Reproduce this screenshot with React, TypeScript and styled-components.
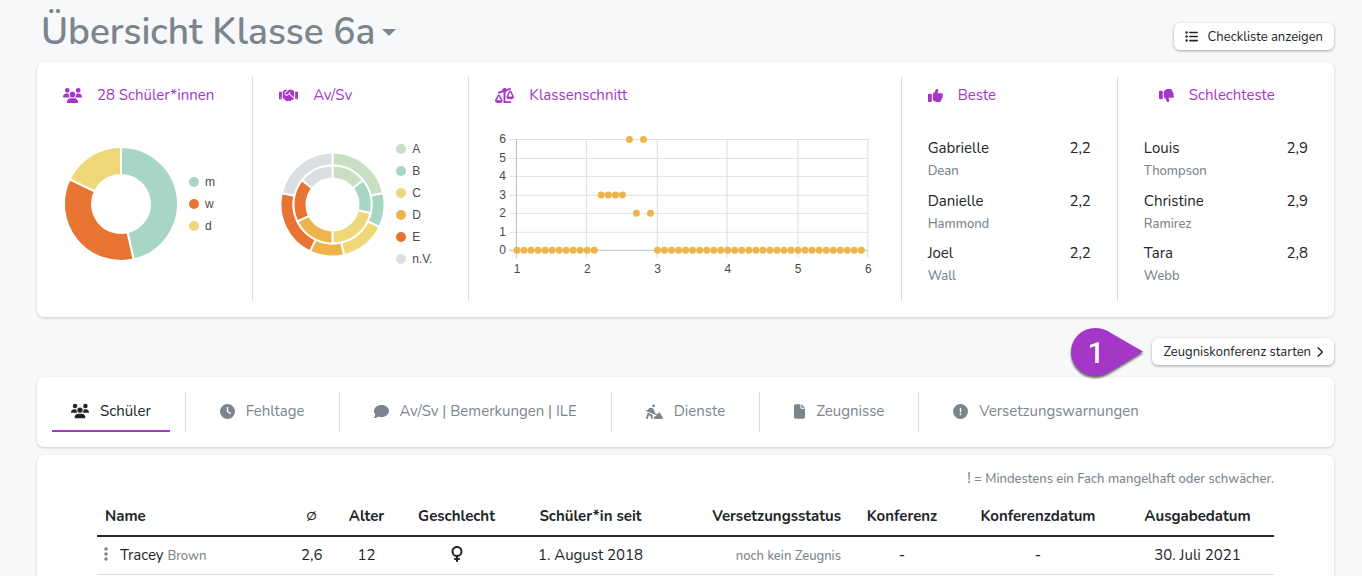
import React from 'react';
import styled, { createGlobalStyle } from 'styled-components';
import { FaBalanceScaleLeft, FaHandshake } from 'react-icons/fa';
import {
  FaUsers,
  FaClock,
  FaComment,
  FaPersonDigging,
  FaFile,
  FaCircleExclamation,
  FaListUl,
  FaVenus,
  FaEllipsisVertical,
  FaChevronRight,
  FaThumbsUp,
  FaThumbsDown,
} from 'react-icons/fa6';

const color = {
  page: '#f7f8fa',
  text: '#212529',
  muted: '#7c858d',
  accent: '#a537c8',
  line: '#dadce0',
  sage: '#c9dfc3',
  mint: '#a8d6c5',
  yellow: '#efd777',
  amber: '#eeb44b',
  orange: '#e87431',
  grey: '#dadde2',
};

const GlobalStyle = createGlobalStyle`
  *, *::before, *::after { box-sizing: border-box; }
  body {
    margin: 0;
    background: ${color.page};
    color: ${color.text};
    font-family: Nunito, Lato, sans-serif;
    font-size: 15px;
    line-height: 22px;
  }
  button { font: inherit; color: inherit; cursor: pointer; }
`;

const Page = styled.div`
  display: flex;
  flex-direction: column;
  min-height: 100vh;
  padding: 0 28px 0 37px;
`;

const Header = styled.header`
  display: flex;
  justify-content: space-between;
  align-items: flex-end;
  height: 50px;
  margin-bottom: 12px;
  padding-left: 4px;
`;

const Title = styled.h1`
  align-self: flex-start;
  margin: 0;
  padding-top: 13px;
  color: ${color.muted};
  font-size: 37px;
  font-weight: 600;
  line-height: 38px;
`;

const TitleButton = styled.button`
  display: flex;
  align-items: center;
  gap: 7px;
  height: 38px;
  padding: 0;
  border: 0;
  background: none;
`;

const Caret = styled.span`
  border: 7px solid transparent;
  border-top-color: currentColor;
  border-bottom: 0;
`;

const Button = styled.button<{ $gap: number }>`
  display: inline-flex;
  align-items: center;
  gap: ${(p) => p.$gap}px;
  height: 27px;
  padding: 0 11px;
  border: 0;
  border-radius: 6px;
  background: #fff;
  box-shadow: 0 1px 3px rgba(0, 0, 0, 0.35);
  font-size: 13px;
  line-height: 20px;
  white-space: nowrap;
`;

const Chevron = styled(FaChevronRight)`
  width: 7px;
  height: 12px;
`;

const FileIcon = styled(FaFile)`
  width: 11px;
  height: 15px;
`;

const Card = styled.section`
  border-radius: 7px;
  background: #fff;
  box-shadow: 0 1px 3px rgba(0, 0, 0, 0.18);
`;

const Stats = styled(Card)`
  display: grid;
  grid-template-columns: 2fr 2fr 4fr 2fr 2fr;
  padding: 15px 0 16px;
`;

const Stat = styled.div`
  display: flex;
  flex-direction: column;
  min-width: 0;
  height: 224px;
  padding: 7px 26px 0;
  &:not(:last-child) { border-right: 1px solid ${color.line}; }
`;

const StatTitle = styled.h2<{ $indent?: number }>`
  display: flex;
  align-items: center;
  gap: 15px;
  margin: 0;
  padding-left: ${(p) => p.$indent ?? 0}px;
  color: ${color.accent};
  font-size: 15px;
  font-weight: 400;
  line-height: 22px;
  white-space: nowrap;
`;

const DonutRow = styled.div`
  display: flex;
  align-items: center;
  gap: 10px;
  height: 140px;
  margin-top: 28px;
`;

const Legend = styled.ul`
  margin: 0;
  padding: 0;
  list-style: none;
  font-family: "Liberation Sans", sans-serif;
  font-size: 12px;
  color: #4a4a4a;
`;

const LegendItem = styled.li<{ $color: string }>`
  display: flex;
  align-items: center;
  gap: 6px;
  height: 22px;
  &::before {
    content: "";
    width: 10px;
    height: 10px;
    border-radius: 50%;
    background: ${(p) => p.$color};
  }
`;

const Plot = styled.svg`
  display: block;
  width: 100%;
  margin-top: 24px;
  font-family: "Liberation Sans", sans-serif;
  font-size: 12px;
  fill: #4a4a4a;
`;

const Ranking = styled.ul`
  display: grid;
  align-content: space-between;
  height: 150px;
  margin: 31px 0 0;
  padding: 0;
  list-style: none;
`;

const RankItem = styled.li`
  display: grid;
  grid-template-columns: 1fr auto;
  row-gap: 1px;
`;

const Surname = styled.span`
  color: ${color.muted};
  font-size: 13px;
  font-weight: 500;
`;

const ActionRow = styled.div`
  display: flex;
  justify-content: flex-end;
  align-items: center;
  height: 60px;
  padding-top: 9px;
`;

const Callout = styled.svg`
  width: 82px;
  height: 60px;
  filter: drop-shadow(0 2px 1px rgba(0, 0, 0, 0.6));
`;

const CalloutNumber = styled.text`
  fill: #fff;
  font-family: Roboto, sans-serif;
  font-size: 30px;
  font-weight: 500;
`;

const TabBar = styled(Card)`
  padding: 15px 0;
`;

const TabList = styled.nav`
  display: flex;
  height: 40px;
`;

const TabSlot = styled.div`
  display: flex;
  padding: 0 15px;
  & + & { border-left: 1px solid ${color.line}; }
`;

const Tab = styled.a<{ $active?: boolean }>`
  display: flex;
  align-items: center;
  gap: 11px;
  padding: 0 19px;
  border-bottom: 2px solid ${(p) => (p.$active ? color.accent : 'transparent')};
  color: ${(p) => (p.$active ? color.text : color.muted)};
  text-decoration: none;
  white-space: nowrap;
`;

const TableCard = styled(Card)`
  flex: 1;
  margin-top: 8px;
  padding: 12px 60px 0;
  border-radius: 7px 7px 0 0;
`;

const Note = styled.p`
  margin: 0;
  color: ${color.muted};
  font-size: 13px;
  font-weight: 500;
  text-align: right;
`;

const Mark = styled.span`
  font-size: 15px;
`;

const Table = styled.table`
  width: 100%;
  margin-top: 6px;
  border-collapse: collapse;
  table-layout: fixed;
`;

type Align = 'left' | 'center' | 'right';

const Th = styled.th<{ $align?: Align }>`
  height: 40px;
  padding: 0 8px;
  border-bottom: 2px solid ${color.text};
  font-weight: 700;
  text-align: ${(p) => p.$align ?? 'center'};
  white-space: nowrap;
`;

const Td = styled.td<{ $align?: Align }>`
  height: 38px;
  padding: 0 8px;
  border-bottom: 1px solid ${color.line};
  text-align: ${(p) => p.$align ?? 'center'};
  white-space: nowrap;
  svg { vertical-align: -2px; }
`;

const MenuButton = styled.button`
  width: 4px;
  margin-right: 11px;
  padding: 0;
  border: 0;
  background: none;
  color: ${color.muted};
  svg { margin-left: -7px; }
`;

const rad = (turn: number) => turn * Math.PI * 2 - Math.PI / 2;

function arc(c: number, outer: number, inner: number, from: number, to: number) {
  const point = (r: number, t: number) =>
    `${(c + r * Math.cos(rad(t))).toFixed(2)} ${(c + r * Math.sin(rad(t))).toFixed(2)}`;
  const large = to - from > 0.5 ? 1 : 0;
  return `M${point(outer, from)}A${outer} ${outer} 0 ${large} 1 ${point(outer, to)}L${point(inner, to)}A${inner} ${inner} 0 ${large} 0 ${point(inner, from)}Z`;
}

interface Ring { outer: number; inner: number; values: number[] }

interface DonutProps { size: number; rings: Ring[]; colors: string[]; label: string }

function Donut({ size, rings, colors, label }: DonutProps) {
  return (
    <svg width={size} height={size} viewBox={`0 0 ${size} ${size}`} role="img" aria-label={label}>
      {rings.map((ring, r) => {
        const total = ring.values.reduce((a, b) => a + b, 0);
        let sum = 0;
        return ring.values.map((v, i) => {
          const from = sum / total;
          sum += v;
          return (
            <path
              key={`${r}-${i}`}
              d={arc(size / 2, ring.outer, ring.inner, from, sum / total)}
              fill={colors[i]}
              stroke="#fff"
              strokeWidth="2"
            />
          );
        });
      })}
    </svg>
  );
}

const genderLegend = [
  { name: 'm', color: color.mint },
  { name: 'w', color: color.orange },
  { name: 'd', color: color.yellow },
];

const gradeLegend = [
  { name: 'A', color: color.sage },
  { name: 'B', color: color.mint },
  { name: 'C', color: color.yellow },
  { name: 'D', color: color.amber },
  { name: 'E', color: color.orange },
  { name: 'n.V.', color: color.grey },
];

const counts: Record<number, number> = { 22: 3, 23: 3, 24: 3, 25: 3, 26: 6, 27: 2, 28: 6, 29: 2 };
const points = Array.from({ length: 50 }, (_, i) => ({ x: i + 10, y: counts[i + 10] ?? 0 }));
const px = (v: number) => 22 + (v - 1) * 70.4;
const py = (v: number) => 120.5 - v * 18.5;

function AveragePlot() {
  return (
    <Plot viewBox="0 0 380 150" role="img" aria-label="Klassenschnitt">
      {[0, 1, 2, 3, 4, 5, 6].map((v) => (
        <g key={v}>
          <path d={`M14 ${Math.floor(py(v)) + 0.5}H374`} stroke={v === 0 ? '#bfbfbf' : '#e2e2e2'} />
          <text x="11" y={py(v) + 4} textAnchor="end">{v}</text>
        </g>
      ))}
      {[1, 2, 3, 4, 5, 6].map((v) => (
        <g key={v}>
          <path d={`M${Math.round(px(v)) - 0.5} 9V128`} stroke={v === 1 ? '#bfbfbf' : '#dcdcdc'} />
          <text x={px(v)} y="143" textAnchor="middle">{v}</text>
        </g>
      ))}
      {points.map((p) => (
        <circle key={p.x} cx={px(p.x / 10)} cy={py(p.y)} r="3.5" fill={color.amber} />
      ))}
    </Plot>
  );
}

const best = [
  ['Gabrielle', 'Dean', '2,2'],
  ['Danielle', 'Hammond', '2,2'],
  ['Joel', 'Wall', '2,2'],
];
const worst = [
  ['Louis', 'Thompson', '2,9'],
  ['Christine', 'Ramirez', '2,9'],
  ['Tara', 'Webb', '2,8'],
];

function RankingList({ items }: { items: string[][] }) {
  return (
    <Ranking>
      {items.map(([first, last, grade]) => (
        <RankItem key={first}>
          <span>{first}</span>
          <span>{grade}</span>
          <Surname>{last}</Surname>
        </RankItem>
      ))}
    </Ranking>
  );
}

const tabs = [
  { label: 'Schüler', icon: <FaUsers size={18} />, active: true },
  { label: 'Fehltage', icon: <FaClock size={15} /> },
  { label: 'Av/Sv | Bemerkungen | ILE', icon: <FaComment size={15} /> },
  { label: 'Dienste', icon: <FaPersonDigging size={17} /> },
  { label: 'Zeugnisse', icon: <FileIcon /> },
  { label: 'Versetzungswarnungen', icon: <FaCircleExclamation size={15} /> },
];

const columns: { label: string; width: number; align?: Align }[] = [
  { label: 'Name', width: 196, align: 'left' },
  { label: '∅', width: 37 },
  { label: 'Alter', width: 73 },
  { label: 'Geschlecht', width: 107 },
  { label: 'Schüler*in seit', width: 161 },
  { label: 'Versetzungsstatus', width: 178, align: 'right' },
  { label: 'Konferenz', width: 106 },
  { label: 'Konferenzdatum', width: 166 },
  { label: 'Ausgabedatum', width: 153 },
];

export default function App() {
  return (
    <>
      <GlobalStyle />
      <Page>
        <Header>
          <Title>
            <TitleButton type="button" aria-haspopup="menu">
              Übersicht Klasse 6a
              <Caret />
            </TitleButton>
          </Title>
          <Button type="button" $gap={10}>
            <FaListUl size={13} />
            Checkliste anzeigen
          </Button>
        </Header>

        <Stats>
          <Stat>
            <StatTitle><FaUsers size={19} />28 Schüler*innen</StatTitle>
            <DonutRow>
              <Donut
                size={116}
                label="Geschlecht"
                colors={genderLegend.map((l) => l.color)}
                rings={[{ outer: 57, inner: 29, values: [13, 10, 5] }]}
              />
              <Legend>
                {genderLegend.map((l) => <LegendItem key={l.name} $color={l.color}>{l.name}</LegendItem>)}
              </Legend>
            </DonutRow>
          </Stat>
          <Stat>
            <StatTitle><FaHandshake size={19} />Av/Sv</StatTitle>
            <DonutRow>
              <Donut
                size={107}
                label="Av/Sv"
                colors={gradeLegend.map((l) => l.color)}
                rings={[
                  { outer: 52, inner: 39, values: [6, 3, 4, 3, 6, 6] },
                  { outer: 39, inner: 26, values: [4, 4, 6, 5, 5, 4] },
                ]}
              />
              <Legend>
                {gradeLegend.map((l) => <LegendItem key={l.name} $color={l.color}>{l.name}</LegendItem>)}
              </Legend>
            </DonutRow>
          </Stat>
          <Stat>
            <StatTitle><FaBalanceScaleLeft size={19} />Klassenschnitt</StatTitle>
            <AveragePlot />
          </Stat>
          <Stat>
            <StatTitle><FaThumbsUp size={15} />Beste</StatTitle>
            <RankingList items={best} />
          </Stat>
          <Stat>
            <StatTitle $indent={15}><FaThumbsDown size={15} />Schlechteste</StatTitle>
            <RankingList items={worst} />
          </Stat>
        </Stats>

        <ActionRow>
          <Callout viewBox="0 0 82 60" role="img" aria-label="1">
            <path d="M73 29.500L40 10.500C36 7.500 31 6 25 6A24 24 0 1 0 25 54C31 54 36 52 40 49.500Z" fill={color.accent} />
            <CalloutNumber x="26" y="41" textAnchor="middle">1</CalloutNumber>
          </Callout>
          <Button type="button" $gap={5}>
            Zeugniskonferenz starten
            <Chevron />
          </Button>
        </ActionRow>

        <TabBar>
          <TabList>
            {tabs.map((t) => (
              <TabSlot key={t.label}>
                <Tab href="#" $active={t.active}>{t.icon}{t.label}</Tab>
              </TabSlot>
            ))}
          </TabList>
        </TabBar>

        <TableCard>
          <Note><Mark>!</Mark> = Mindestens ein Fach mangelhaft oder schwächer.</Note>
          <Table>
            <colgroup>
              {columns.map((c) => <col key={c.label} width={c.width} />)}
            </colgroup>
            <thead>
              <tr>
                {columns.map((c) => <Th key={c.label} scope="col" $align={c.align}>{c.label}</Th>)}
              </tr>
            </thead>
            <tbody>
              <tr>
                <Td $align="left">
                  <MenuButton type="button" aria-label="Aktionen"><FaEllipsisVertical size={16} /></MenuButton>
                  Tracey <Surname>Brown</Surname>
                </Td>
                <Td>2,6</Td>
                <Td>12</Td>
                <Td><FaVenus size={16} aria-label="weiblich" /></Td>
                <Td>1. August 2018</Td>
                <Td $align="right"><Surname>noch kein Zeugnis</Surname></Td>
                <Td>-</Td>
                <Td>-</Td>
                <Td>30. Juli 2021</Td>
              </tr>
            </tbody>
          </Table>
        </TableCard>
      </Page>
    </>
  );
}
